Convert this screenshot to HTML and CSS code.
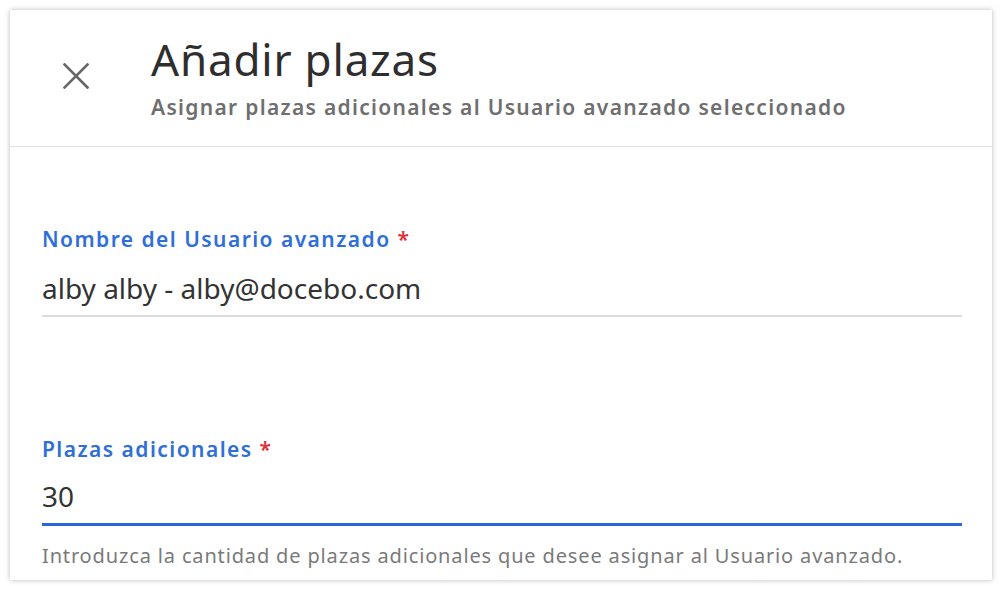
FILE: index.html
```html
<!DOCTYPE html>
<html lang="es">
<head>
<meta charset="utf-8">
<title>Añadir plazas</title>
<link rel="stylesheet" href="styles.css">
</head>
<body>
<div class="panel">
  <header class="header">
    <button class="close" aria-label="Cerrar">
      <svg viewBox="0 0 26 26" width="26" height="26"><path d="M1.5 1.5 L24.5 24.5 M24.5 1.5 L1.5 24.5" stroke="#666" stroke-width="2.6" stroke-linecap="square" fill="none"/></svg>
    </button>
    <div class="titles">
      <h1 class="title">Añadir plazas</h1>
      <p class="subtitle">Asignar plazas adicionales al Usuario avanzado seleccionado</p>
    </div>
  </header>
  <main class="content">
    <div class="field field-user">
      <label class="label">Nombre del Usuario avanzado <span class="req">*</span></label>
      <div class="value value-user">alby alby - alby@docebo.com</div>
    </div>
    <div class="field field-seats">
      <label class="label">Plazas adicionales <span class="req">*</span></label>
      <div class="value value-seats">30</div>
      <p class="help">Introduzca la cantidad de plazas adicionales que desee asignar al Usuario avanzado.</p>
    </div>
  </main>
</div>
</body>
</html>
```

FILE: styles.css
```css
* { box-sizing: border-box; }
html, body { margin: 0; padding: 0; background: #ffffff; }
body {
  padding: 10px;
  font-family: "Noto Sans", "Open Sans", sans-serif;
  color: #333333;
}
.panel {
  width: 982px;
  height: 570px;
  background: #ffffff;
  box-shadow: 0 0 5px rgba(0, 0, 0, 0.28);
  overflow: hidden;
}
.header {
  display: flex;
  align-items: flex-start;
  height: 137px;
  padding-top: 23px;
  border-bottom: 1px solid #e2e2e2;
}
.close {
  margin: 30px 0 0 53px;
  padding: 0;
  width: 26px;
  height: 26px;
  border: 0;
  background: transparent;
  display: block;
}
.close svg { display: block; }
.titles { margin-left: 62px; }
.title {
  margin: 0;
  font-size: 44px;
  line-height: 52px;
  font-weight: 400;
  letter-spacing: 0.8px;
  color: #2e2e2e;
}
.subtitle {
  margin: 8px 0 0;
  font-size: 21px;
  line-height: 28px;
  font-weight: 600;
  letter-spacing: 1.3px;
  color: #6f6f6f;
}
.content {
  padding: 78px 30px 0 32px;
}
.label {
  display: block;
  font-size: 21px;
  line-height: 28px;
  font-weight: 600;
  letter-spacing: 1.45px;
  color: #2f6fd8;
}
.req { color: #e0303a; }
.value {
  font-size: 28px;
  line-height: 36px;
  color: #333333;
}
.value-user {
  margin-top: 17px;
  padding-bottom: 9px;
  border-bottom: 2px solid #dcdcdc;
}
.field-seats { margin-top: 118px; }
.value-seats {
  margin-top: 15px;
  padding-bottom: 9px;
  border-bottom: 3px solid #2b66d9;
}
.help {
  margin: 18px 0 0;
  font-size: 20px;
  line-height: 24px;
  letter-spacing: 0.85px;
  color: #7a7a7a;
}
```
